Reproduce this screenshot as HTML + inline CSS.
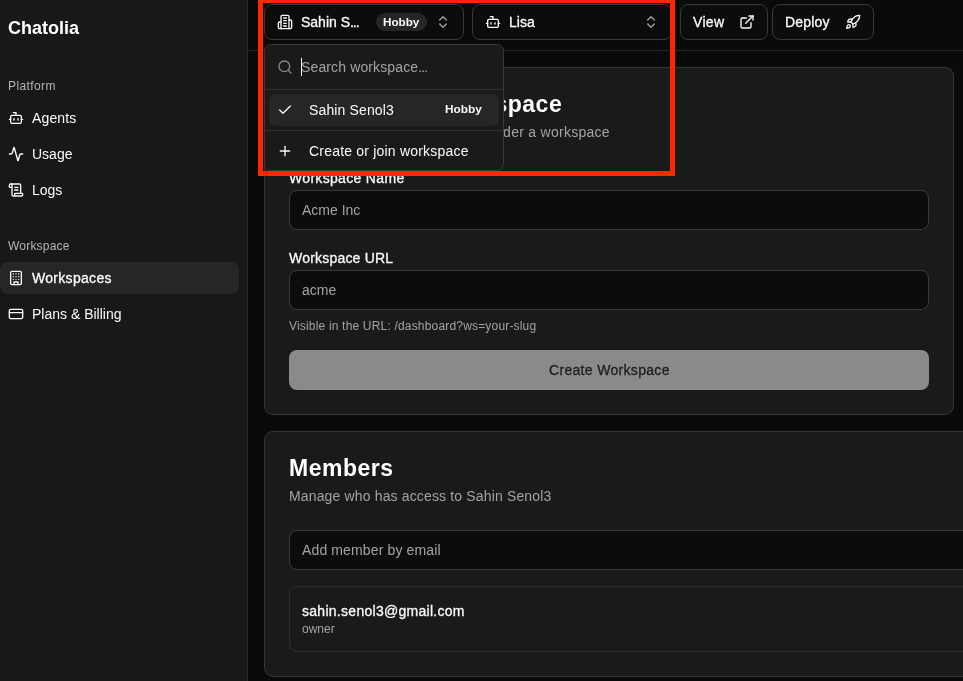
<!DOCTYPE html>
<html lang="en">
<head>
<meta charset="utf-8">
<title>Chatolia</title>
<style>
*{box-sizing:border-box;margin:0;padding:0}
html,body{width:963px;height:681px;overflow:hidden;background:#0a0a0a}
body{font-family:"Liberation Sans",sans-serif;color:#fafafa;position:relative;-webkit-font-smoothing:antialiased}
.abs{position:absolute}
.med{-webkit-text-stroke:0.3px currentColor}
svg{display:block;fill:none;stroke:currentColor;stroke-width:2;stroke-linecap:round;stroke-linejoin:round}
.t,.grp,.label{will-change:transform}
.t{position:absolute;white-space:nowrap;line-height:1;transform-origin:0 50%}
/* sidebar */
#sidebar{position:absolute;left:0;top:0;width:247px;height:681px;background:#181818}
#sbborder{position:absolute;left:247px;top:0;width:1px;height:681px;background:#262626}
.nav{position:absolute;left:0;width:239px;height:32px;border-radius:8px}
.nav svg{position:absolute;left:8px;top:8px;width:16px;height:16px}
.nav .t{left:32px;top:9px;font-size:14px}
.nav.active{background:#262626}
.grp{position:absolute;left:8px;font-size:12px;color:#b4b4b4;line-height:1;white-space:nowrap}
/* header */
#hdrline{position:absolute;left:248px;top:50px;width:715px;height:1px;background:#242424}
.btn{position:absolute;top:4px;height:36px;border:1px solid #393939;border-radius:8px;background:#0c0c0c}
.btn svg{position:absolute;width:16px;height:16px}
.btn .t{font-size:14px;top:10px}
/* cards */
.card{position:absolute;left:264px;background:#1a1a1a;border:1px solid #353535;border-radius:9px}
.input{position:absolute;left:289px;height:40px;border:1px solid #3a3a3a;border-radius:8px;background:#0c0c0c}
.input .t{left:12px;top:12px;font-size:14px;color:#a3a3a3}
.label{position:absolute;left:289px;font-size:14px;-webkit-text-stroke:0.3px currentColor;color:#fafafa;line-height:1;white-space:nowrap}
</style>
</head>
<body>

<!-- SIDEBAR -->
<div id="sidebar">
  <div class="t" id="brand" style="left:8px;top:19px;font-size:18px;font-weight:bold;color:#fff">Chatolia</div>
  <div class="grp" id="g1" style="top:80px;letter-spacing:0.4px">Platform</div>

  <div class="nav" style="top:102px">
    <svg viewBox="0 0 24 24"><path d="M12 8V4H8"/><rect width="16" height="12" x="4" y="8" rx="2"/><path d="M2 14h2"/><path d="M20 14h2"/><path d="M15 13v2"/><path d="M9 13v2"/></svg>
    <div class="t" id="n1" style="letter-spacing:0.13px">Agents</div>
  </div>
  <div class="nav" style="top:138px">
    <svg viewBox="0 0 24 24"><path d="M22 12h-2.48a2 2 0 0 0-1.93 1.46l-2.35 8.36a.25.25 0 0 1-.48 0L9.24 2.18a.25.25 0 0 0-.48 0l-2.35 8.36A2 2 0 0 1 4.49 12H2"/></svg>
    <div class="t" id="n2">Usage</div>
  </div>
  <div class="nav" style="top:174px">
    <svg viewBox="0 0 24 24"><path d="M15 12h-5"/><path d="M15 8h-5"/><path d="M19 17V5a2 2 0 0 0-2-2H4"/><path d="M8 21h12a2 2 0 0 0 2-2v-1a1 1 0 0 0-1-1H11a1 1 0 0 0-1 1v1a2 2 0 1 1-4 0V5a2 2 0 1 0-4 0v2a1 1 0 0 0 1 1h3"/></svg>
    <div class="t" id="n3">Logs</div>
  </div>

  <div class="grp" id="g2" style="top:240px;letter-spacing:0.2px">Workspace</div>

  <div class="nav active" style="top:262px">
    <svg viewBox="0 0 24 24"><rect width="16" height="20" x="4" y="2" rx="2" ry="2"/><path d="M9 22v-4h6v4"/><path d="M8 6h.01"/><path d="M16 6h.01"/><path d="M12 6h.01"/><path d="M12 10h.01"/><path d="M12 14h.01"/><path d="M16 10h.01"/><path d="M16 14h.01"/><path d="M8 10h.01"/><path d="M8 14h.01"/></svg>
    <div class="t med" id="n4" style="letter-spacing:0.3px">Workspaces</div>
  </div>
  <div class="nav" style="top:298px">
    <svg viewBox="0 0 24 24"><rect width="20" height="14" x="2" y="5" rx="2"/><line x1="2" x2="22" y1="10" y2="10"/></svg>
    <div class="t" id="n5">Plans &amp; Billing</div>
  </div>
</div>
<div id="sbborder"></div>

<!-- HEADER -->
<div id="hdrline"></div>

<div class="btn" id="b1" style="left:264px;width:200px">
  <svg style="left:12px;top:9px" viewBox="0 0 24 24"><path d="M6 22V4a2 2 0 0 1 2-2h8a2 2 0 0 1 2 2v18Z"/><path d="M6 12H4a2 2 0 0 0-2 2v6a2 2 0 0 0 2 2h2"/><path d="M18 9h2a2 2 0 0 1 2 2v9a2 2 0 0 1-2 2h-2"/><path d="M10 6h4"/><path d="M10 10h4"/><path d="M10 14h4"/><path d="M10 18h4"/></svg>
  <div class="t med" id="b1t" style="left:36px">Sahin S<span style="letter-spacing:-1.1px">...</span></div>
  <div class="abs" id="hb1" style="left:111px;top:8px;width:51px;height:18px;border-radius:9px;background:#262626"></div>
  <div class="t" id="hb1t" style="left:118.3px;top:11px;font-size:11.7px;font-weight:bold">Hobby</div>
  <svg style="left:170px;top:9px;color:#a1a1a1" viewBox="0 0 24 24"><path d="m7 15 5 5 5-5"/><path d="m7 9 5-5 5 5"/></svg>
</div>

<div class="btn" id="b2" style="left:472px;width:200px">
  <svg style="left:12px;top:9px" viewBox="0 0 24 24"><path d="M12 8V4H8"/><rect width="16" height="12" x="4" y="8" rx="2"/><path d="M2 14h2"/><path d="M20 14h2"/><path d="M15 13v2"/><path d="M9 13v2"/></svg>
  <div class="t med" id="b2t" style="left:36px">Lisa</div>
  <svg style="left:170px;top:9px;color:#a1a1a1" viewBox="0 0 24 24"><path d="m7 15 5 5 5-5"/><path d="m7 9 5-5 5 5"/></svg>
</div>

<div class="btn" id="b3" style="left:680px;width:88px">
  <div class="t med" id="b3t" style="left:12px;letter-spacing:0.3px">View</div>
  <svg style="left:58px;top:9px" viewBox="0 0 24 24"><path d="M15 3h6v6"/><path d="M10 14 21 3"/><path d="M18 13v6a2 2 0 0 1-2 2H5a2 2 0 0 1-2-2V8a2 2 0 0 1 2-2h6"/></svg>
</div>

<div class="btn" id="b4" style="left:772px;width:102px">
  <div class="t med" id="b4t" style="left:12px;letter-spacing:0.2px">Deploy</div>
  <svg style="left:72px;top:9px" viewBox="0 0 24 24"><path d="M4.5 16.5c-1.5 1.26-2 5-2 5s3.74-.5 5-2c.71-.84.7-2.13-.09-2.91a2.18 2.18 0 0 0-2.91-.09z"/><path d="m12 15-3-3a22 22 0 0 1 2-3.950A12.880 12.880 0 0 1 22 2c0 2.720-.780 7.500-6 11a22.350 22.350 0 0 1-4 2z"/><path d="M9 12H4s.55-3.030 2-4c1.620-1.080 5 0 5 0"/><path d="M12 15v5s3.030-.55 4-2c1.080-1.620 0-5 0-5"/></svg>
</div>

<!-- CARD 1 -->
<div class="card" id="c1" style="top:67px;width:690px;height:348px"></div>
<div class="t" id="c1title" style="right:401px;top:93px;font-size:23px;font-weight:bold;letter-spacing:0.5px;color:#fff">Create a new workspace</div>
<div class="t" id="c1sub" style="right:353px;top:125px;font-size:14px;letter-spacing:0.27px;color:#a3a3a3">Agents are grouped under a workspace</div>

<div class="label" id="l1" style="top:171px;letter-spacing:0.32px">Workspace Name</div>
<div class="input" id="i1" style="top:190px;width:640px"><div class="t" id="i1t">Acme Inc</div></div>
<div class="label" id="l2" style="top:251px;letter-spacing:0.2px">Workspace URL</div>
<div class="input" id="i2" style="top:270px;width:640px"><div class="t" id="i2t">acme</div></div>
<div class="t" id="help" style="left:289px;top:320px;font-size:12px;letter-spacing:0.18px;color:#a3a3a3">Visible in the URL: /dashboard?ws=your-slug</div>
<div class="abs" id="cbtn" style="left:289px;top:350px;width:640px;height:40px;border-radius:8px;background:#8a8a8a"></div>
<div class="t med" id="cbtnt" style="left:548.7px;top:363px;font-size:14px;letter-spacing:0.32px;color:#202020">Create Workspace</div>

<!-- CARD 2 -->
<div class="card" id="c2" style="top:431px;width:760px;height:246px"></div>
<div class="t" id="c2title" style="left:289px;top:457px;font-size:23px;font-weight:bold;letter-spacing:0.5px;color:#fff">Members</div>
<div class="t" id="c2sub" style="left:289px;top:489px;font-size:14px;letter-spacing:0.15px;color:#a3a3a3">Manage who has access to Sahin Senol3</div>
<div class="input" id="i3" style="top:530px;width:740px"><div class="t" id="i3t" style="letter-spacing:0.13px">Add member by email</div></div>
<div class="abs" id="mrow" style="left:289px;top:586px;width:740px;height:66px;border:1px solid #2e2e2e;border-radius:8px"></div>
<div class="t" id="memail" style="left:302px;top:604px;font-size:14px;-webkit-text-stroke:0.3px currentColor;letter-spacing:0.28px;color:#fafafa">sahin.senol3@gmail.com</div>
<div class="t" id="mrole" style="left:302px;top:623px;font-size:12px;color:#a3a3a3">owner</div>

<!-- POPOVER -->
<div class="abs" id="pop" style="left:264px;top:44px;width:240px;height:127px;background:#1a1a1a;border:1px solid #393939;border-radius:7px"></div>
<svg class="abs" id="psearch" style="left:277px;top:59px;width:16px;height:16px;color:#8a8a8a" viewBox="0 0 24 24"><circle cx="11" cy="11" r="8"/><path d="m21 21-4.3-4.3"/></svg>
<div class="abs" id="caret" style="left:301px;top:58px;width:1px;height:18px;background:#fff"></div>
<div class="t" id="pph" style="left:301px;top:60px;font-size:14px;letter-spacing:0.13px;color:#a3a3a3">Search workspace<span style="letter-spacing:-0.9px">...</span></div>
<div class="abs" id="psep1" style="left:265px;top:89px;width:238px;height:1px;background:#313131"></div>
<div class="abs" id="pitem" style="left:269px;top:94px;width:230px;height:32px;border-radius:7px;background:#262626"></div>
<svg class="abs" id="pcheck" style="left:277px;top:102px;width:16px;height:16px;color:#fafafa" viewBox="0 0 24 24"><path d="M20 6 9 17l-5-5"/></svg>
<div class="t" id="pname" style="left:309px;top:103px;font-size:14px;letter-spacing:0.14px">Sahin Senol3</div>
<div class="t" id="phobby" style="left:445.3px;top:104px;font-size:11.8px;font-weight:bold">Hobby</div>
<div class="abs" id="psep2" style="left:265px;top:130px;width:238px;height:1px;background:#313131"></div>
<svg class="abs" id="pplus" style="left:277px;top:143px;width:16px;height:16px;color:#fafafa" viewBox="0 0 24 24"><path d="M5 12h14"/><path d="M12 5v14"/></svg>
<div class="t" id="pcreate" style="left:309px;top:144px;font-size:14px;letter-spacing:0.2px">Create or join workspace</div>

<!-- RED ANNOTATION -->
<div class="abs" id="red" style="left:258px;top:-2px;width:417px;height:178px;border:5px solid #ff2600"></div>

</body>
</html>
